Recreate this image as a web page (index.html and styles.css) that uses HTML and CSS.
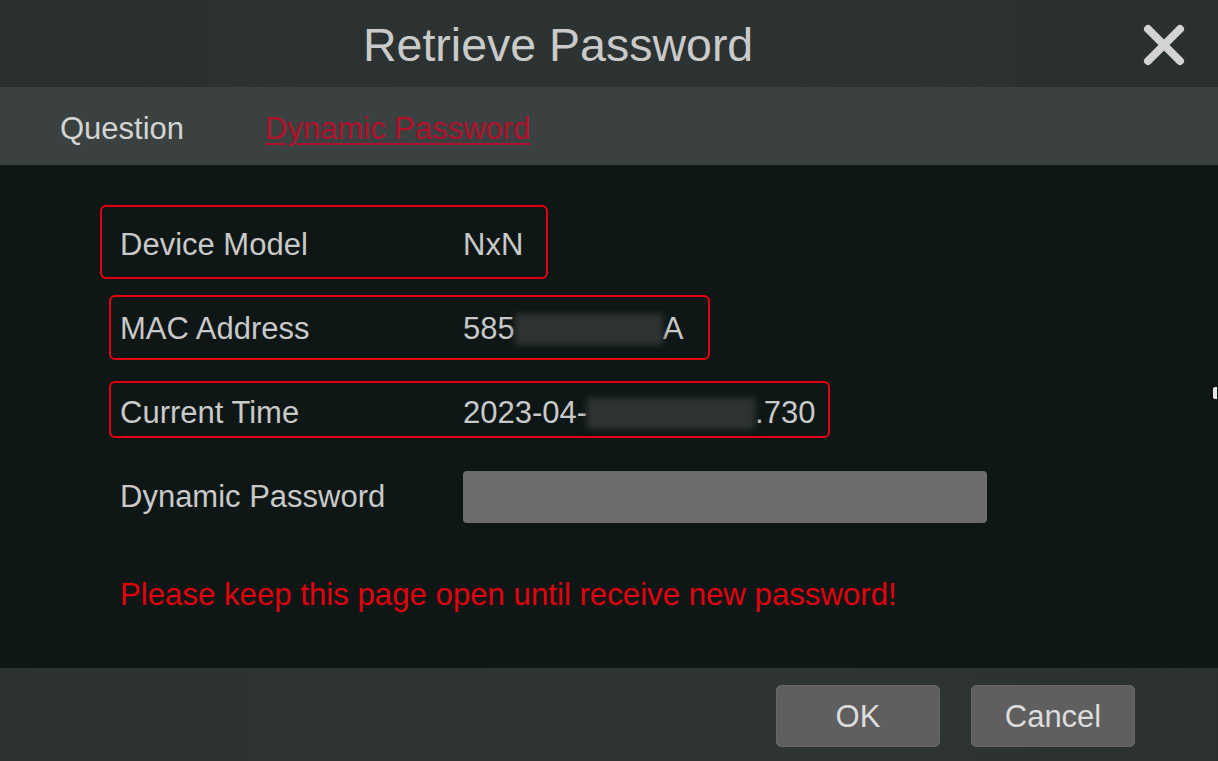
FILE: index.html
```html
<!DOCTYPE html>
<html lang="en">
<head>
    <meta charset="UTF-8">
    <title>Retrieve Password</title>
    <link rel="stylesheet" href="styles.css">
</head>
<body>
    <div class="dialog">
        <header class="titlebar">
            <h1 class="title">Retrieve Password</h1>
            <button class="close-btn" aria-label="Close">
                <svg width="42" height="42" viewBox="0 0 42 42">
                    <path d="M5 5 L37 37 M37 5 L5 37" stroke="#d2d3d2" stroke-width="8" stroke-linecap="round" fill="none"/>
                </svg>
            </button>
        </header>

        <nav class="tabs">
            <span class="tab">Question</span>
            <span class="tab active">Dynamic Password</span>
        </nav>

        <main class="content">
            <div class="row">
                <span class="label">Device Model</span>
                <span class="value">NxN</span>
                <span class="mark mark-model"></span>
            </div>
            <div class="row">
                <span class="label">MAC Address</span>
                <span class="value">585<span class="hidden hidden-mac"></span>A</span>
                <span class="mark mark-mac"></span>
            </div>
            <div class="row">
                <span class="label">Current Time</span>
                <span class="value">2023-04-<span class="hidden hidden-time"></span>.730</span>
                <span class="mark mark-time"></span>
            </div>
            <div class="row">
                <span class="label">Dynamic Password</span>
                <input type="text" class="password-input">
            </div>
            <p class="warning">Please keep this page open until receive new password!</p>
            <span class="cursor"></span>
        </main>

        <footer class="actions">
            <button class="action-btn">OK</button>
            <button class="action-btn">Cancel</button>
        </footer>
    </div>
</body>
</html>
```

FILE: styles.css
```css
body {
    margin: 0;
    background: #0f1716;
    font-family: "Liberation Sans", Arial, sans-serif;
    overflow: hidden;
}
.dialog {
    height: 761px;
    display: flex;
    flex-direction: column;
}
.titlebar {
    height: 87px;
    flex: none;
    display: flex;
    align-items: center;
    justify-content: space-between;
    padding: 0 33px 0 363px;
    background: linear-gradient(90deg, #29302f 0%, #2c3332 50%, #29302f 100%);
}
.title {
    margin: 0;
    font-size: 46.5px;
    font-weight: 400;
    color: #c9cac9;
    line-height: 1;
    padding-top: 3px;
}
.close-btn {
    background: none;
    border: none;
    padding: 0;
    width: 42px;
    height: 42px;
    margin-top: 2px;
    cursor: pointer;
}
.close-btn svg {
    display: block;
}
.tabs {
    height: 78px;
    flex: none;
    display: flex;
    align-items: center;
    gap: 81px;
    padding-left: 60px;
    background: #3a4140;
}
.tab {
    font-size: 31px;
    color: #d3d4d3;
    padding-top: 5px;
}
.tab.active {
    color: #b3102c;
    text-decoration: underline;
    text-decoration-thickness: 2px;
    text-underline-offset: 4px;
}
.content {
    flex: 1;
    position: relative;
    padding: 37px 0 0 120px;
    background: #0f1716;
}
.row {
    position: relative;
    height: 84px;
    display: flex;
    align-items: center;
}
.label {
    width: 343px;
    flex: none;
    font-size: 31px;
    color: #c8c9c8;
    padding-top: 2px;
}
.value {
    font-size: 31px;
    color: #c8c9c8;
    display: flex;
    align-items: center;
    padding-top: 2px;
}
.hidden {
    display: inline-block;
    height: 31px;
    background: #2e3433;
    filter: blur(3px);
}
.hidden-mac {
    width: 148px;
}
.hidden-time {
    width: 168px;
}
.mark {
    position: absolute;
    border: 2px solid #e5000f;
    border-radius: 6px;
    box-sizing: border-box;
}
.mark-model {
    left: -20px;
    top: 3px;
    width: 448px;
    height: 74px;
}
.mark-mac {
    left: -11px;
    top: 9px;
    width: 601px;
    height: 65px;
}
.mark-time {
    left: -11px;
    top: 11px;
    width: 721px;
    height: 57px;
}
.password-input {
    width: 524px;
    height: 52px;
    margin-top: 2px;
    box-sizing: border-box;
    border: none;
    border-radius: 4px;
    background: #6c6c6b;
    outline: none;
}
.warning {
    margin: 39px 0 0;
    font-size: 31.2px;
    line-height: 36px;
    color: #e3000f;
}
.cursor {
    position: absolute;
    right: 1px;
    top: 222px;
    width: 4px;
    height: 12px;
    background: #e8e8e8;
    border-radius: 2px 0 0 2px;
}
.actions {
    height: 93px;
    flex: none;
    display: flex;
    align-items: center;
    justify-content: flex-end;
    gap: 31px;
    padding: 3px 83px 0 0;
    box-sizing: border-box;
    background: linear-gradient(90deg, #2b3231 0%, #2e3534 60%, #2a3130 100%);
}
.action-btn {
    width: 164px;
    height: 62px;
    border: 1px solid #666766;
    border-radius: 5px;
    background: #5e5f5e;
    color: #dcdddc;
    font-family: inherit;
    font-size: 31px;
    padding: 2px 0 0;
    cursor: pointer;
}
```
